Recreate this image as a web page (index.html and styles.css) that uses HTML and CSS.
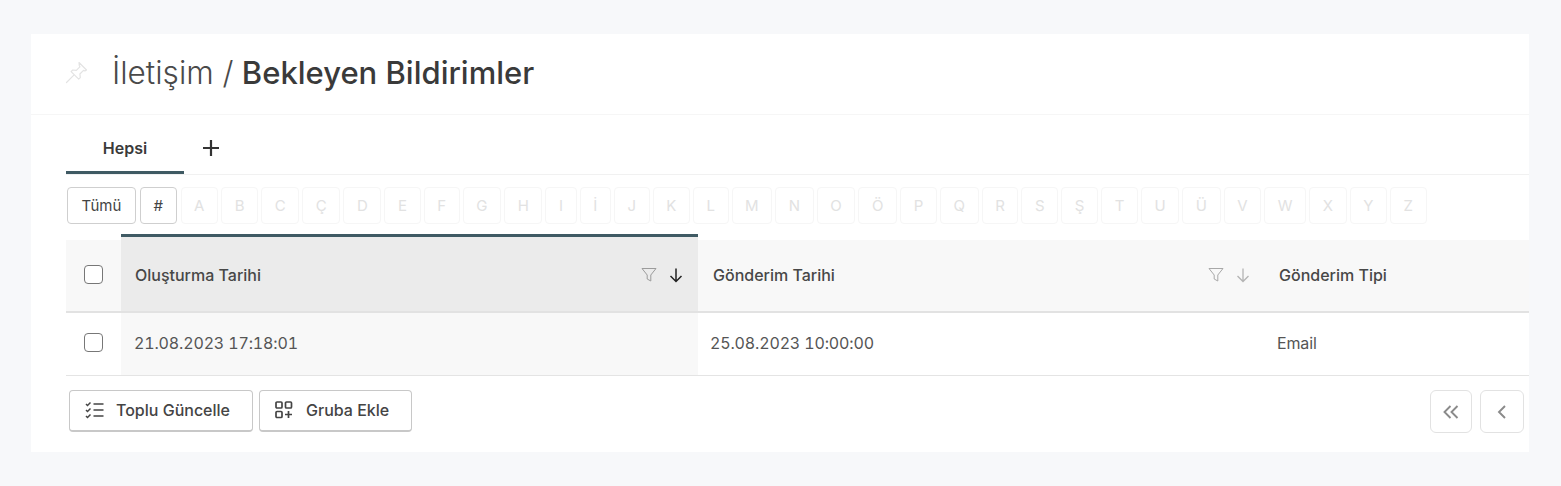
FILE: index.html
```html
<!DOCTYPE html>
<html lang="tr">
<head>
    <meta charset="UTF-8">
    <title>Bekleyen Bildirimler</title>
    <link rel="stylesheet" href="styles.css">
</head>
<body>

<div class="panel">
    <div class="page-title">
        <svg class="pin" width="24" height="24" viewBox="0 0 24 24" fill="none" stroke="#e3e3e3" stroke-width="1.2" stroke-linejoin="round" stroke-linecap="round">
            <path d="M14 2.500l7.500 7.500-1.600 1-1.400-.6-3.600 3.600.4 3.600-1.600 1.600-3.800-3.800-3.800-3.800 1.600-1.600 3.600.4 3.600-3.600-.6-1.400z"/>
            <path d="M8.600 15.400L1.500 22.500"/>
        </svg>
        <h1><span class="crumb">İletişim /</span> Bekleyen Bildirimler</h1>
    </div>

    <div class="tabs">
        <div class="tab active">Hepsi</div>
        <svg class="tab-add" width="16" height="16" viewBox="0 0 16 16" stroke="#333" stroke-width="2.200"><path d="M8 0v16M0 8h16"/></svg>
    </div>

    <div class="letters">
        <button class="letter on wide">Tümü</button>
        <button class="letter on hash">#</button>
        <button class="letter">A</button>
        <button class="letter">B</button>
        <button class="letter">C</button>
        <button class="letter">Ç</button>
        <button class="letter">D</button>
        <button class="letter">E</button>
        <button class="letter">F</button>
        <button class="letter">G</button>
        <button class="letter">H</button>
        <button class="letter">I</button>
        <button class="letter">İ</button>
        <button class="letter">J</button>
        <button class="letter">K</button>
        <button class="letter">L</button>
        <button class="letter">M</button>
        <button class="letter">N</button>
        <button class="letter">O</button>
        <button class="letter">Ö</button>
        <button class="letter">P</button>
        <button class="letter">Q</button>
        <button class="letter">R</button>
        <button class="letter">S</button>
        <button class="letter">Ş</button>
        <button class="letter">T</button>
        <button class="letter">U</button>
        <button class="letter">Ü</button>
        <button class="letter">V</button>
        <button class="letter">W</button>
        <button class="letter">X</button>
        <button class="letter">Y</button>
        <button class="letter">Z</button>
    </div>

    <div class="grid">
        <div class="head check-cell"><span class="check"></span></div>
        <div class="head sorted">
            <span>Oluşturma Tarihi</span>
            <span class="head-icons">
                <svg width="16" height="16" viewBox="0 0 16 16" fill="none" stroke="#9b9b9b"><path d="M1 1.500h14L9.800 8v6L6.200 12V8z" stroke-linejoin="round"/></svg>
                <svg width="14" height="16" viewBox="0 0 14 16" fill="none" stroke="#222" stroke-width="1.500"><path d="M7 1.500v13M1.500 9l5.500 5.500L12.500 9"/></svg>
            </span>
        </div>
        <div class="head second">
            <span>Gönderim Tarihi</span>
            <span class="head-icons">
                <svg width="16" height="16" viewBox="0 0 16 16" fill="none" stroke="#a8a8a8"><path d="M1 1.500h14L9.800 8v6L6.200 12V8z" stroke-linejoin="round"/></svg>
                <svg width="14" height="16" viewBox="0 0 14 16" fill="none" stroke="#b4b4b4" stroke-width="1.300"><path d="M7 1.500v13M1.500 9l5.500 5.500L12.500 9"/></svg>
            </span>
        </div>
        <div class="head">Gönderim Tipi</div>

        <div class="cell check-cell shaded"><span class="check"></span></div>
        <div class="cell shaded">21.08.2023 17:18:01</div>
        <div class="cell">25.08.2023 10:00:00</div>
        <div class="cell">Email</div>
    </div>

    <div class="footer">
        <button class="action">
            <svg width="20" height="18" viewBox="0 0 20 18" fill="none" stroke="#444" stroke-width="1.500">
                <path d="M1 3l1.500 1.500L5.500 1.500M1 9l1.500 1.500L5.500 7.500M1 15l1.500 1.500L5.500 13.500"/>
                <path d="M8.500 3h10M8.500 9h10M8.500 15h10"/>
            </svg>
            Toplu Güncelle
        </button>
        <button class="action group">
            <svg width="18" height="18" viewBox="0 0 18 18" fill="none" stroke="#444" stroke-width="1.700">
                <rect x="1" y="1" width="6" height="6" rx="1"/>
                <rect x="10.500" y="1" width="6" height="6" rx="1"/>
                <rect x="1" y="10.500" width="6" height="6" rx="1"/>
                <path d="M13.500 10v7M10 13.500h7"/>
            </svg>
            Gruba Ekle
        </button>
        <div class="pager">
            <button class="page-btn">
                <svg width="16" height="14" viewBox="0 0 16 14" fill="none" stroke="#8a8a8a" stroke-width="1.900"><path d="M7.500 1L1.500 7l6 6M14.500 1l-6 6 6 6"/></svg>
            </button>
            <button class="page-btn last">
                <svg width="10" height="14" viewBox="0 0 10 14" fill="none" stroke="#8a8a8a" stroke-width="1.900"><path d="M8 1L2 7l6 6"/></svg>
            </button>
        </div>
    </div>
</div>

</body>
</html>
```

FILE: styles.css
```css
* {
    box-sizing: border-box;
}

body {
    margin: 0;
    height: 486px;
    padding: 34px 32px 34px 31px;
    background-color: #f7f8fa;
    font-family: Inter, sans-serif;
    overflow: hidden;
}

.panel {
    background-color: #ffffff;
    height: 418px;
    overflow: hidden;
}

.page-title {
    display: flex;
    align-items: center;
    height: 81px;
    padding: 0 0 4px 34px;
    border-bottom: 1px solid #f6f6f6;
}

.pin {
    margin-right: 23px;
}

h1 {
    margin: 0;
    font-size: 31px;
    font-weight: 500;
    color: #3a3a3a;
}

.crumb {
    font-size: 31.500px;
    font-weight: 300;
    color: #4a4a4a;
}

.tabs {
    display: flex;
    align-items: center;
    height: 60px;
    margin-left: 35px;
    border-bottom: 1px solid #f1f1f1;
}

.tab {
    width: 118px;
    height: 59px;
    padding-top: 23px;
    text-align: center;
    font-size: 16px;
    font-weight: 600;
    color: #3a3a3a;
    border-bottom: 3px solid #3f5a63;
}

.tab-add {
    margin-left: 19px;
    margin-top: 6px;
}

.letters {
    display: flex;
    gap: 3px;
    margin: 12px 0 0 36px;
    height: 37px;
}

.letter {
    height: 37px;
    padding: 0 12.600px;
    background-color: #ffffff;
    border: 1px solid #f6f6f6;
    border-radius: 4px;
    font-family: Inter, sans-serif;
    font-size: 15px;
    color: #e2e2e2;
}

.letter.on {
    border-color: #cfcfcf;
    color: #444444;
}

.letter.wide {
    padding: 0 13.500px;
    margin-right: 1px;
}

.letter.hash {
    margin-right: 1px;
}

.grid {
    display: grid;
    grid-template-columns: 55px 577px 567px 1fr;
    margin: 10px 0 0 35px;
}

.head {
    display: flex;
    align-items: center;
    justify-content: space-between;
    height: 79px;
    padding: 0 15px 2px 14px;
    border-top: 6px solid #ffffff;
    border-bottom: 2px solid #e2e2e2;
    background-color: #f8f8f8;
    font-size: 16px;
    font-weight: 500;
    color: #474747;
}

.head.sorted {
    border-top: 3px solid #3f5a63;
    padding-top: 3px;
    background-color: #ebebeb;
}

.head.second {
    padding-left: 15px;
}

.head-icons {
    display: flex;
    align-items: center;
    gap: 12px;
    margin-top: 1px;
}

.cell {
    display: flex;
    align-items: center;
    height: 63px;
    padding: 0 0 3px 12px;
    border-bottom: 1px solid #e4e4e4;
    font-size: 16px;
    font-variant-numeric: tabular-nums;
    letter-spacing: -.15px;
    color: #555555;
}

.shaded {
    background-color: #f8f8f8;
    padding-left: 13px;
}

.check-cell {
    justify-content: center;
    padding: 0 0 2px 0;
}

.cell.check-cell {
    padding: 0 0 3px 0;
    background-color: #ffffff;
}

.check {
    width: 19px;
    height: 19px;
    background-color: #ffffff;
    border: 1.500px solid #777777;
    border-radius: 4px;
}

.footer {
    display: flex;
    align-items: flex-start;
    gap: 6px;
    margin: 14px 5px 0 38px;
}

.action {
    display: flex;
    align-items: center;
    gap: 11px;
    height: 42px;
    padding: 0 22px 2px 15px;
    background-color: #ffffff;
    border: 1px solid #c8c8c8;
    border-bottom-width: 2px;
    border-radius: 4px;
    font-family: Inter, sans-serif;
    font-size: 16px;
    font-weight: 500;
    color: #444444;
}

.action.group {
    gap: 13px;
}

.pager {
    display: flex;
    gap: 8px;
    margin-left: auto;
}

.page-btn {
    display: flex;
    align-items: center;
    justify-content: center;
    width: 42px;
    height: 43px;
    background-color: #ffffff;
    border: 1.500px solid #e2e2e2;
    border-radius: 6px;
}

.page-btn.last {
    width: 44px;
}
```
